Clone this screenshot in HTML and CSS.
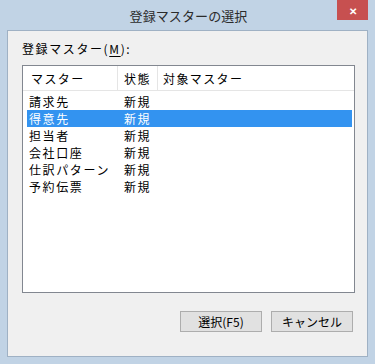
FILE: index.html
```html
<!DOCTYPE html>
<html lang="ja">

<head>
    <meta charset="UTF-8">
    <title>登録マスターの選択</title>
    <link rel="stylesheet" href="styles.css">
</head>

<body>
    <div class="window">
        <div class="titlebar">
            <span class="title">登録マスターの選択</span>
            <div class="close">&#x2715;</div>
        </div>
        <div class="client">
            <div class="label">登録マスター(<u>M</u>):</div>
            <div class="listview">
                <div class="list-header">
                    <div class="col col-name">マスター</div>
                    <div class="col col-state">状態</div>
                    <div class="col col-target">対象マスター</div>
                </div>
                <div class="list-body">
                    <div class="row"><span class="cell-name">請求先</span><span>新規</span></div>
                    <div class="row selected"><span class="cell-name">得意先</span><span>新規</span></div>
                    <div class="row"><span class="cell-name">担当者</span><span>新規</span></div>
                    <div class="row"><span class="cell-name">会社口座</span><span>新規</span></div>
                    <div class="row"><span class="cell-name">仕訳パターン</span><span>新規</span></div>
                    <div class="row"><span class="cell-name">予約伝票</span><span>新規</span></div>
                </div>
            </div>
            <div class="buttons">
                <button class="btn">選択(F5)</button>
                <button class="btn">キャンセル</button>
            </div>
        </div>
    </div>
</body>

</html>
```

FILE: styles.css
```css
body {
    margin: 0;
    font-family: "Noto Sans CJK JP", "Noto Sans", sans-serif;
}

.window {
    width: 375px;
    height: 364px;
    box-sizing: border-box;
    background-color: #c1d3e5;
    display: flex;
    flex-direction: column;
}

.titlebar {
    height: 30px;
    position: relative;
    display: flex;
    justify-content: center;
    align-items: center;
}

.title {
    font-size: 13px;
    color: #2b2b2b;
    padding-left: 2px;
    letter-spacing: 0.1px;
}

.close {
    position: absolute;
    top: 0;
    right: 7px;
    width: 31px;
    height: 20px;
    background-color: #c75050;
    color: #fff;
    font-size: 10px;
    font-weight: bold;
    display: flex;
    justify-content: center;
    align-items: center;
}

.client {
    flex: 1;
    margin: 0 7px 7px 7px;
    border: 1px solid #9fb1c4;
    background-color: #f0f0f0;
    padding: 10px 12px 0 14px;
    display: flex;
    flex-direction: column;
}

.label {
    font-size: 12px;
    line-height: 16px;
    letter-spacing: 1.6px;
    color: #000;
    margin-bottom: 8px;
}

.label u {
    text-underline-offset: 2px;
}

.listview {
    height: 228px;
    box-sizing: border-box;
    border: 1px solid #828790;
    background-color: #fff;
}

.list-header {
    display: flex;
    height: 24px;
    border-bottom: 1px solid #e5e5e5;
    font-size: 12px;
    letter-spacing: 1.4px;
    color: #000;
}

.col {
    display: flex;
    align-items: center;
    box-sizing: border-box;
    border-right: 1px solid #e5e5e5;
}

.col-name {
    width: 95px;
    padding-left: 8px;
}

.col-state {
    width: 40px;
    padding-left: 6px;
}

.col-target {
    border-right: none;
    padding-left: 5px;
}

.list-body {
    padding-top: 2px;
}

.row {
    display: flex;
    height: 17px;
    align-items: center;
    margin: 0 2px 0 4px;
    padding-left: 2px;
    font-size: 12px;
    letter-spacing: 1.6px;
    color: #000;
}

.row.selected {
    background-color: #3393f0;
    color: #fff;
}

.cell-name {
    width: 95px;
}

.buttons {
    display: flex;
    justify-content: flex-end;
    gap: 9px;
    margin-top: 18px;
    padding-right: 2px;
}

.btn {
    width: 82px;
    height: 21px;
    border: 1px solid #adadad;
    background-color: #e1e1e1;
    font-family: "Noto Sans CJK JP", sans-serif;
    font-size: 12px;
    color: #000;
    padding: 0;
}
```
